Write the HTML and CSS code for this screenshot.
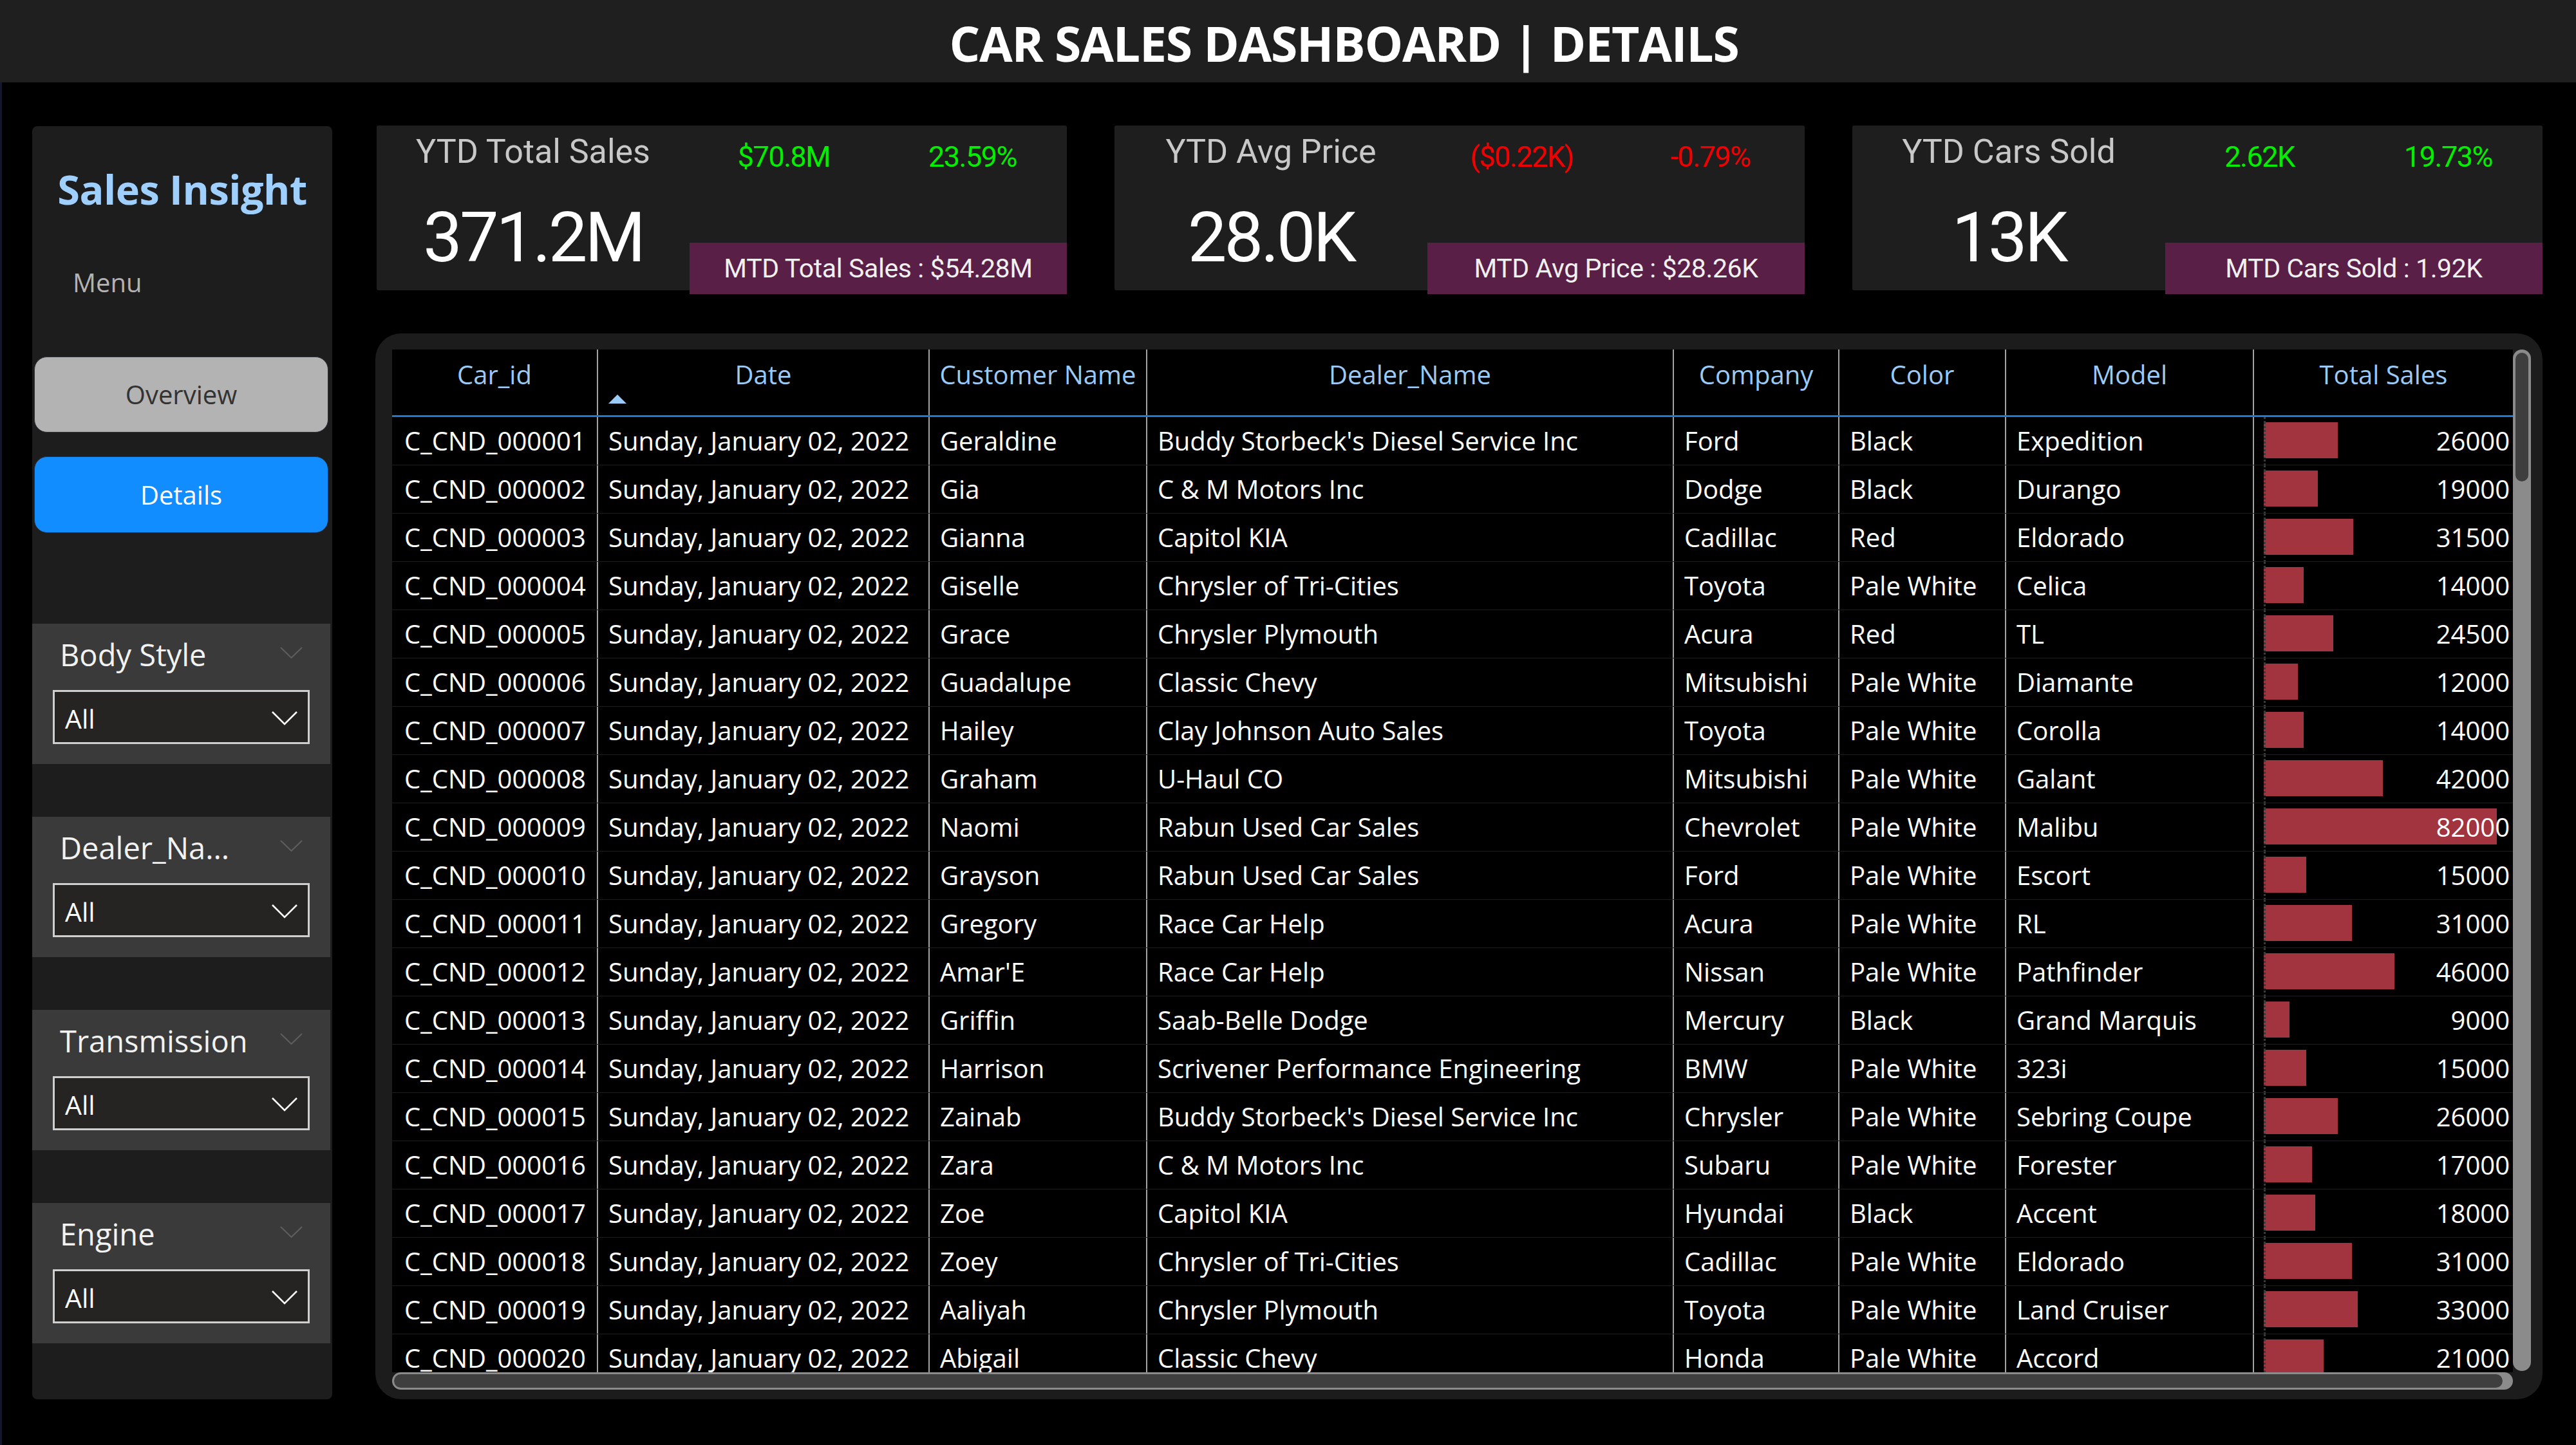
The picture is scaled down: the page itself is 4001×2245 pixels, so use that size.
FILE: index.html
```html
<!DOCTYPE html>
<html lang="en">
<head>
<meta charset="utf-8">
<title>Car Sales Dashboard | Details</title>
<link rel="stylesheet" href="styles.css">
</head>
<body>
<header class="topbar"><h1 class="title">CAR SALES DASHBOARD | DETAILS</h1></header>
<div class="content">
  <aside class="sidebar">
    <div class="brand">Sales Insight</div>
    <div class="menu-label">Menu</div>
    <div class="nav-btn nav-overview">Overview</div>
    <div class="nav-btn nav-details">Details</div>
    <div class="slicers">
      <div class="slicer">
        <div class="slicer-head"><span class="slicer-title">Body Style</span><svg class="slicer-collapse" viewBox="0 0 35 18"><polyline points="1,1 17.5,17 34,1"/></svg></div>
        <div class="dropdown"><span>All</span><svg class="dropdown-chev" viewBox="0 0 40 22"><polyline points="1,1 20,20 39,1"/></svg></div>
      </div>
      <div class="slicer">
        <div class="slicer-head"><span class="slicer-title">Dealer_Na...</span><svg class="slicer-collapse" viewBox="0 0 35 18"><polyline points="1,1 17.5,17 34,1"/></svg></div>
        <div class="dropdown"><span>All</span><svg class="dropdown-chev" viewBox="0 0 40 22"><polyline points="1,1 20,20 39,1"/></svg></div>
      </div>
      <div class="slicer">
        <div class="slicer-head"><span class="slicer-title">Transmission</span><svg class="slicer-collapse" viewBox="0 0 35 18"><polyline points="1,1 17.5,17 34,1"/></svg></div>
        <div class="dropdown"><span>All</span><svg class="dropdown-chev" viewBox="0 0 40 22"><polyline points="1,1 20,20 39,1"/></svg></div>
      </div>
      <div class="slicer">
        <div class="slicer-head"><span class="slicer-title">Engine</span><svg class="slicer-collapse" viewBox="0 0 35 18"><polyline points="1,1 17.5,17 34,1"/></svg></div>
        <div class="dropdown"><span>All</span><svg class="dropdown-chev" viewBox="0 0 40 22"><polyline points="1,1 20,20 39,1"/></svg></div>
      </div>
    </div>
  </aside>

  <main class="main">
    <section class="kpis">
      <div class="kpi">
        <div class="kpi-left">
          <div class="kpi-title">YTD Total Sales</div>
          <div class="kpi-value">371.2M</div>
        </div>
        <div class="kpi-right">
          <div class="kpi-deltas"><span class="up">$70.8M</span><span class="up">23.59%</span></div>
          <div class="kpi-mtd">MTD Total Sales : $54.28M</div>
        </div>
      </div>
      <div class="kpi">
        <div class="kpi-left">
          <div class="kpi-title">YTD Avg Price</div>
          <div class="kpi-value">28.0K</div>
        </div>
        <div class="kpi-right">
          <div class="kpi-deltas"><span class="down">($0.22K)</span><span class="down">-0.79%</span></div>
          <div class="kpi-mtd">MTD Avg Price : $28.26K</div>
        </div>
      </div>
      <div class="kpi">
        <div class="kpi-left">
          <div class="kpi-title">YTD Cars Sold</div>
          <div class="kpi-value">13K</div>
        </div>
        <div class="kpi-right">
          <div class="kpi-deltas"><span class="up">2.62K</span><span class="up">19.73%</span></div>
          <div class="kpi-mtd">MTD Cars Sold : 1.92K</div>
        </div>
      </div>
    </section>

    <section class="table-panel">
      <div class="grid-wrap">
        <div class="thead">
          <div class="th">Car_id</div>
          <div class="th">Date<div class="sort-arrow"></div></div>
          <div class="th">Customer Name</div>
          <div class="th">Dealer_Name</div>
          <div class="th">Company</div>
          <div class="th">Color</div>
          <div class="th">Model</div>
          <div class="th">Total Sales</div>
        </div>
        <div class="tbody">
          <div class="trow"><div class="td">C_CND_000001</div><div class="td">Sunday, January 02, 2022</div><div class="td">Geraldine</div><div class="td">Buddy Storbeck's Diesel Service Inc</div><div class="td">Ford</div><div class="td">Black</div><div class="td">Expedition</div><div class="td td-sales"><div class="bar-track"><div class="bar" style="width:114.8px"></div></div><span class="sales-val">26000</span></div></div>
          <div class="trow"><div class="td">C_CND_000002</div><div class="td">Sunday, January 02, 2022</div><div class="td">Gia</div><div class="td">C &amp; M Motors Inc</div><div class="td">Dodge</div><div class="td">Black</div><div class="td">Durango</div><div class="td td-sales"><div class="bar-track"><div class="bar" style="width:83.9px"></div></div><span class="sales-val">19000</span></div></div>
          <div class="trow"><div class="td">C_CND_000003</div><div class="td">Sunday, January 02, 2022</div><div class="td">Gianna</div><div class="td">Capitol KIA</div><div class="td">Cadillac</div><div class="td">Red</div><div class="td">Eldorado</div><div class="td td-sales"><div class="bar-track"><div class="bar" style="width:139.1px"></div></div><span class="sales-val">31500</span></div></div>
          <div class="trow"><div class="td">C_CND_000004</div><div class="td">Sunday, January 02, 2022</div><div class="td">Giselle</div><div class="td">Chrysler of Tri-Cities</div><div class="td">Toyota</div><div class="td">Pale White</div><div class="td">Celica</div><div class="td td-sales"><div class="bar-track"><div class="bar" style="width:61.8px"></div></div><span class="sales-val">14000</span></div></div>
          <div class="trow"><div class="td">C_CND_000005</div><div class="td">Sunday, January 02, 2022</div><div class="td">Grace</div><div class="td">Chrysler Plymouth</div><div class="td">Acura</div><div class="td">Red</div><div class="td">TL</div><div class="td td-sales"><div class="bar-track"><div class="bar" style="width:108.2px"></div></div><span class="sales-val">24500</span></div></div>
          <div class="trow"><div class="td">C_CND_000006</div><div class="td">Sunday, January 02, 2022</div><div class="td">Guadalupe</div><div class="td">Classic Chevy</div><div class="td">Mitsubishi</div><div class="td">Pale White</div><div class="td">Diamante</div><div class="td td-sales"><div class="bar-track"><div class="bar" style="width:53px"></div></div><span class="sales-val">12000</span></div></div>
          <div class="trow"><div class="td">C_CND_000007</div><div class="td">Sunday, January 02, 2022</div><div class="td">Hailey</div><div class="td">Clay Johnson Auto Sales</div><div class="td">Toyota</div><div class="td">Pale White</div><div class="td">Corolla</div><div class="td td-sales"><div class="bar-track"><div class="bar" style="width:61.8px"></div></div><span class="sales-val">14000</span></div></div>
          <div class="trow"><div class="td">C_CND_000008</div><div class="td">Sunday, January 02, 2022</div><div class="td">Graham</div><div class="td">U-Haul CO</div><div class="td">Mitsubishi</div><div class="td">Pale White</div><div class="td">Galant</div><div class="td td-sales"><div class="bar-track"><div class="bar" style="width:185.4px"></div></div><span class="sales-val">42000</span></div></div>
          <div class="trow"><div class="td">C_CND_000009</div><div class="td">Sunday, January 02, 2022</div><div class="td">Naomi</div><div class="td">Rabun Used Car Sales</div><div class="td">Chevrolet</div><div class="td">Pale White</div><div class="td">Malibu</div><div class="td td-sales"><div class="bar-track"><div class="bar" style="width:362px"></div></div><span class="sales-val">82000</span></div></div>
          <div class="trow"><div class="td">C_CND_000010</div><div class="td">Sunday, January 02, 2022</div><div class="td">Grayson</div><div class="td">Rabun Used Car Sales</div><div class="td">Ford</div><div class="td">Pale White</div><div class="td">Escort</div><div class="td td-sales"><div class="bar-track"><div class="bar" style="width:66.2px"></div></div><span class="sales-val">15000</span></div></div>
          <div class="trow"><div class="td">C_CND_000011</div><div class="td">Sunday, January 02, 2022</div><div class="td">Gregory</div><div class="td">Race Car Help</div><div class="td">Acura</div><div class="td">Pale White</div><div class="td">RL</div><div class="td td-sales"><div class="bar-track"><div class="bar" style="width:136.9px"></div></div><span class="sales-val">31000</span></div></div>
          <div class="trow"><div class="td">C_CND_000012</div><div class="td">Sunday, January 02, 2022</div><div class="td">Amar'E</div><div class="td">Race Car Help</div><div class="td">Nissan</div><div class="td">Pale White</div><div class="td">Pathfinder</div><div class="td td-sales"><div class="bar-track"><div class="bar" style="width:203.1px"></div></div><span class="sales-val">46000</span></div></div>
          <div class="trow"><div class="td">C_CND_000013</div><div class="td">Sunday, January 02, 2022</div><div class="td">Griffin</div><div class="td">Saab-Belle Dodge</div><div class="td">Mercury</div><div class="td">Black</div><div class="td">Grand Marquis</div><div class="td td-sales"><div class="bar-track"><div class="bar" style="width:39.7px"></div></div><span class="sales-val">9000</span></div></div>
          <div class="trow"><div class="td">C_CND_000014</div><div class="td">Sunday, January 02, 2022</div><div class="td">Harrison</div><div class="td">Scrivener Performance Engineering</div><div class="td">BMW</div><div class="td">Pale White</div><div class="td">323i</div><div class="td td-sales"><div class="bar-track"><div class="bar" style="width:66.2px"></div></div><span class="sales-val">15000</span></div></div>
          <div class="trow"><div class="td">C_CND_000015</div><div class="td">Sunday, January 02, 2022</div><div class="td">Zainab</div><div class="td">Buddy Storbeck's Diesel Service Inc</div><div class="td">Chrysler</div><div class="td">Pale White</div><div class="td">Sebring Coupe</div><div class="td td-sales"><div class="bar-track"><div class="bar" style="width:114.8px"></div></div><span class="sales-val">26000</span></div></div>
          <div class="trow"><div class="td">C_CND_000016</div><div class="td">Sunday, January 02, 2022</div><div class="td">Zara</div><div class="td">C &amp; M Motors Inc</div><div class="td">Subaru</div><div class="td">Pale White</div><div class="td">Forester</div><div class="td td-sales"><div class="bar-track"><div class="bar" style="width:75px"></div></div><span class="sales-val">17000</span></div></div>
          <div class="trow"><div class="td">C_CND_000017</div><div class="td">Sunday, January 02, 2022</div><div class="td">Zoe</div><div class="td">Capitol KIA</div><div class="td">Hyundai</div><div class="td">Black</div><div class="td">Accent</div><div class="td td-sales"><div class="bar-track"><div class="bar" style="width:79.5px"></div></div><span class="sales-val">18000</span></div></div>
          <div class="trow"><div class="td">C_CND_000018</div><div class="td">Sunday, January 02, 2022</div><div class="td">Zoey</div><div class="td">Chrysler of Tri-Cities</div><div class="td">Cadillac</div><div class="td">Pale White</div><div class="td">Eldorado</div><div class="td td-sales"><div class="bar-track"><div class="bar" style="width:136.9px"></div></div><span class="sales-val">31000</span></div></div>
          <div class="trow"><div class="td">C_CND_000019</div><div class="td">Sunday, January 02, 2022</div><div class="td">Aaliyah</div><div class="td">Chrysler Plymouth</div><div class="td">Toyota</div><div class="td">Pale White</div><div class="td">Land Cruiser</div><div class="td td-sales"><div class="bar-track"><div class="bar" style="width:145.7px"></div></div><span class="sales-val">33000</span></div></div>
          <div class="trow"><div class="td">C_CND_000020</div><div class="td">Sunday, January 02, 2022</div><div class="td">Abigail</div><div class="td">Classic Chevy</div><div class="td">Honda</div><div class="td">Pale White</div><div class="td">Accord</div><div class="td td-sales"><div class="bar-track"><div class="bar" style="width:92.7px"></div></div><span class="sales-val">21000</span></div></div>
        </div>
      </div>
      <div class="vscroll"><div class="vthumb"></div></div>
      <div class="hscroll"><div class="hthumb"></div></div>
    </section>
  </main>
</div>
</body>
</html>
```

FILE: styles.css
```css
* { box-sizing: border-box; margin: 0; padding: 0; }

html, body { width: 4001px; height: 2245px; }

body {
  background: #000;
  font-family: "Open Sans", "Noto Sans", sans-serif;
  color: #fff;
  overflow: hidden;
}

/* ---------- top bar ---------- */
.topbar {
  height: 128px;
  background: #1f1f1f;
  display: flex;
  justify-content: center;
  align-items: center;
  padding: 7px 0 0 174px;
}
.title {
  font-size: 75px;
  font-weight: 700;
  line-height: 1;
  letter-spacing: -1.2px;
  color: #fff;
}

/* ---------- layout ---------- */
.content {
  display: flex;
  gap: 67px;
  padding: 68px 0 0 47px;
  border-left: 3px solid #14172b;
  height: 2117px;
}

/* ---------- sidebar ---------- */
.sidebar {
  width: 466px;
  height: 1978px;
  background: #1d1d1d;
  border-radius: 8px;
  display: flex;
  flex-direction: column;
  flex-shrink: 0;
}
.brand {
  margin-top: 66px;
  text-align: center;
  font-size: 63px;
  font-weight: 700;
  line-height: 1;
  color: #9fcfff;
  letter-spacing: -0.5px;
}
.menu-label {
  margin-top: 94px;
  margin-left: 63px;
  font-size: 40px;
  line-height: 1;
  color: #b3b3b3;
}
.nav-btn {
  margin-left: 3px;
  width: 457px;
  border-radius: 20px;
  border: 1px solid #2c3038;
  display: flex;
  align-items: center;
  justify-content: center;
  font-size: 40px;
  line-height: 1;
}
.nav-overview {
  margin-top: 95px;
  height: 118px;
  background: #b3b3b3;
  color: #333;
}
.nav-details {
  margin-top: 37px;
  height: 119px;
  background: #118dff;
  color: #fff;
}

.slicers {
  margin-top: 141px;
  display: flex;
  flex-direction: column;
  gap: 82px;
}
.slicer {
  width: 463px;
  height: 218px;
  background: #3a3a3a;
  padding: 25px 32px 0 32px;
}
.slicer-head {
  display: flex;
  justify-content: space-between;
  align-items: flex-start;
  padding: 0 11px;
}
.slicer-title {
  font-size: 47px;
  line-height: 1;
  color: #f2f2f2;
  white-space: nowrap;
}
.slicer-collapse {
  width: 35px;
  height: 18px;
  margin-top: 11px;
  fill: none;
  stroke: #5e5e5e;
  stroke-width: 2;
}
.dropdown {
  margin-top: 31px;
  width: 399px;
  height: 84px;
  border: 3px solid #cfcfcf;
  background: #252423;
  display: flex;
  align-items: center;
  justify-content: space-between;
  padding: 4px 16px 0 16px;
  font-size: 41px;
  line-height: 1;
  color: #fff;
}
.dropdown-chev {
  width: 40px;
  height: 22px;
  fill: none;
  stroke: #fff;
  stroke-width: 2.5;
}

/* ---------- main ---------- */
.main {
  width: 3367px;
  display: flex;
  flex-direction: column;
}

.kpis {
  display: flex;
  gap: 74px;
  margin: -1px 0 0 2px;
}
.kpi {
  width: 1072px;
  height: 256px;
  background: #1e1e1e;
  border-radius: 3px;
  display: grid;
  grid-template-columns: 486px 1fr;
  font-family: Roboto, "Liberation Sans", sans-serif;
}
.kpi-left {
  display: flex;
  flex-direction: column;
  align-items: center;
}
.kpi-title {
  margin-top: 15px;
  font-size: 52px;
  line-height: 1;
  color: #c8c8c8;
  white-space: nowrap;
}
.kpi-value {
  margin-top: 53px;
  font-size: 108px;
  line-height: 1;
  letter-spacing: -4px;
  color: #fff;
}
.kpi-right {
  display: flex;
  flex-direction: column;
}
.kpi-deltas {
  display: flex;
  margin-top: 26px;
  font-size: 45px;
  line-height: 1;
  letter-spacing: -1.5px;
}
.kpi-deltas span { flex: 1; text-align: center; }
.up { color: #00f000; }
.down { color: #f00000; }
.kpi-mtd {
  margin-top: auto;
  margin-bottom: -6px;
  height: 80px;
  background: #5a1f47;
  display: flex;
  align-items: center;
  justify-content: center;
  font-size: 41px;
  line-height: 1;
  letter-spacing: -0.4px;
  color: #f0f0f0;
}

/* ---------- table panel ---------- */
.table-panel {
  margin-top: 67px;
  width: 3366px;
  height: 1656px;
  background: #1c1c1c;
  border-radius: 40px;
  padding: 25px 18px 15px 26px;
  display: grid;
  grid-template-columns: 3294px 28px;
  grid-template-rows: 1589px 27px;
}
.grid-wrap {
  grid-area: 1 / 1;
  overflow: hidden;
  background: #000;
}
.thead, .trow {
  display: grid;
  grid-template-columns: 318px 515px 338px 818px 257px 259px 385px 404px;
}
.thead {
  height: 105px;
  border-bottom: 3px solid #1f78d1;
}
.th {
  padding-top: 12px;
  text-align: center;
  font-size: 40px;
  line-height: 54px;
  color: #9ccaf6;
  border-left: 2px solid #a3a3a3;
  white-space: nowrap;
}
.th:first-child { border-left: none; }
.sort-arrow {
  width: 0;
  height: 0;
  margin: 4px 0 0 16px;
  border-left: 14px solid transparent;
  border-right: 14px solid transparent;
  border-bottom: 14px solid #9ccaf6;
}

.trow {
  height: 75px;
  border-bottom: 1px solid #1e1e1e;
}
.td {
  font-size: 40px;
  line-height: 74px;
  padding-left: 16px;
  white-space: nowrap;
  overflow: hidden;
  border-left: 2px solid #a3a3a3;
  color: #fff;
}
.td:first-child {
  padding-left: 19px;
  border-left: none;
}
.td-sales {
  display: grid;
  padding: 0 5px 0 15px;
}
.bar-track {
  grid-area: 1 / 1;
  padding-top: 8px;
  background: repeating-linear-gradient(to bottom, #3a3a3a 0 3px, transparent 3px 6px) left top / 3px 100% no-repeat;
}
.bar {
  height: 56px;
  background: repeating-linear-gradient(to bottom, #3a3a3a 0 3px, transparent 3px 6px) left top / 3px 100% no-repeat, #a1343f;
}
.sales-val {
  grid-area: 1 / 1;
  justify-self: end;
}

/* ---------- scrollbars ---------- */
.vscroll {
  grid-area: 1 / 2;
  height: 1587px;
  background: #8b8b8b;
  border-radius: 14px;
  padding: 5px 4px;
}
.vthumb {
  height: 200px;
  background: #3e3e3e;
  border-radius: 10px;
}
.hscroll {
  grid-area: 2 / 1;
  background: #8b8b8b;
  border-radius: 14px;
  padding: 3px 16px 3px 3px;
}
.hthumb {
  height: 21px;
  background: #3f3f3f;
  border-radius: 11px;
}
```
